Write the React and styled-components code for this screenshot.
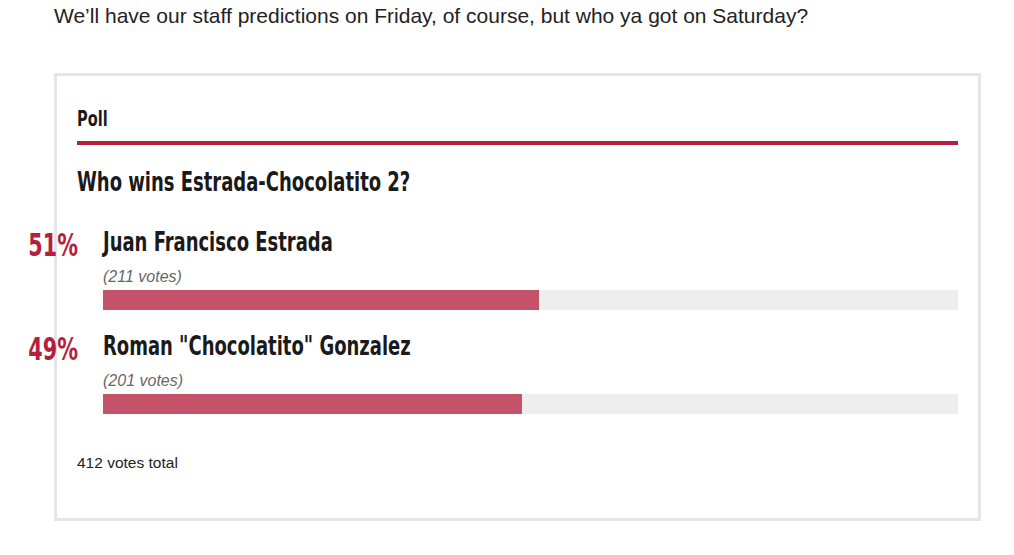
import React from "react";
import styled, { createGlobalStyle } from "styled-components";

const GlobalStyle = createGlobalStyle`
  body {
    margin: 0;
    background: #ffffff;
  }
`;

const Page = styled.div`
  padding: 3px 33px 0 54px;
  font-family: "Liberation Sans", Arial, sans-serif;
  color: #222;
`;

const Intro = styled.p`
  margin: 0;
  font-size: 21px;
  line-height: 26px;
  color: #222;
`;

const Card = styled.div`
  margin-top: 44px;
  width: 881px;
  height: 442px;
  border: 3px solid #e6e6e6;
  padding: 0 20px;
  box-sizing: content-box;
`;

// display face: a heavy condensed type, squeezed from the bold sans
const Heading = styled.div`
  font-family: "DejaVu Sans", "Liberation Sans", sans-serif;
  font-stretch: condensed;
  font-weight: 700;
  color: #1a1a1a;
  white-space: nowrap;
`;

const Squeeze = styled.span`
  display: inline-block;
  transform: scaleX(${(p) => p.$x || 0.74});
  transform-origin: ${(p) => (p.$right ? "right" : "left")} center;
`;

const Label = styled(Heading)`
  font-size: 21px;
  line-height: 24px;
  padding-top: 31px;
  padding-bottom: 10px;
  border-bottom: 4px solid #b41f3e;
`;

const Question = styled(Heading)`
  font-size: 27px;
  line-height: 32px;
  margin-top: 21px;
`;

const Options = styled.div`
  display: flex;
  flex-direction: column;
  gap: 21px;
  margin-top: 29px;
  padding-left: 26px;
`;

const Option = styled.div`
  position: relative;
`;

const Percent = styled(Heading)`
  position: absolute;
  right: 100%;
  top: 0;
  margin-right: 25px;
  font-size: 32px;
  line-height: 36px;
  color: #b41f3e;
`;

const Name = styled(Heading)`
  font-size: 27px;
  line-height: 30px;
`;

const Votes = styled.div`
  font-size: 16px;
  font-style: italic;
  color: #666;
  line-height: 20px;
  margin-top: 10px;
`;

const Track = styled.div`
  height: 20px;
  background: #eeeeee;
  margin-top: 3px;
`;

const Fill = styled.div`
  height: 100%;
  background: #c4536a;
`;

const Total = styled.div`
  margin-top: 40px;
  font-size: 15.5px;
  color: #222;
`;

const options = [
  { name: "Juan Francisco Estrada", votes: 211 },
  { name: 'Roman "Chocolatito" Gonzalez', votes: 201 },
];

const App = () => {
  const total = options.reduce((s, o) => s + o.votes, 0);
  return (
    <Page>
      <GlobalStyle />
      <Intro>
        We’ll have our staff predictions on Friday, of course, but who ya got on Saturday?
      </Intro>
      <Card>
        <Label>
          <Squeeze $x={0.77}>Poll</Squeeze>
        </Label>
        <Question>
          <Squeeze>Who wins Estrada-Chocolatito 2?</Squeeze>
        </Question>
        <Options>
          {options.map((o) => {
            const pct = Math.round((o.votes / total) * 100);
            return (
              <Option key={o.name}>
                <Percent>
                  <Squeeze $x={0.72} $right>{pct}%</Squeeze>
                </Percent>
                <Name>
                  <Squeeze>{o.name}</Squeeze>
                </Name>
                <Votes>({o.votes} votes)</Votes>
                <Track>
                  <Fill style={{ width: pct + "%" }} />
                </Track>
              </Option>
            );
          })}
        </Options>
        <Total>{total} votes total</Total>
      </Card>
    </Page>
  );
};

export default App;
